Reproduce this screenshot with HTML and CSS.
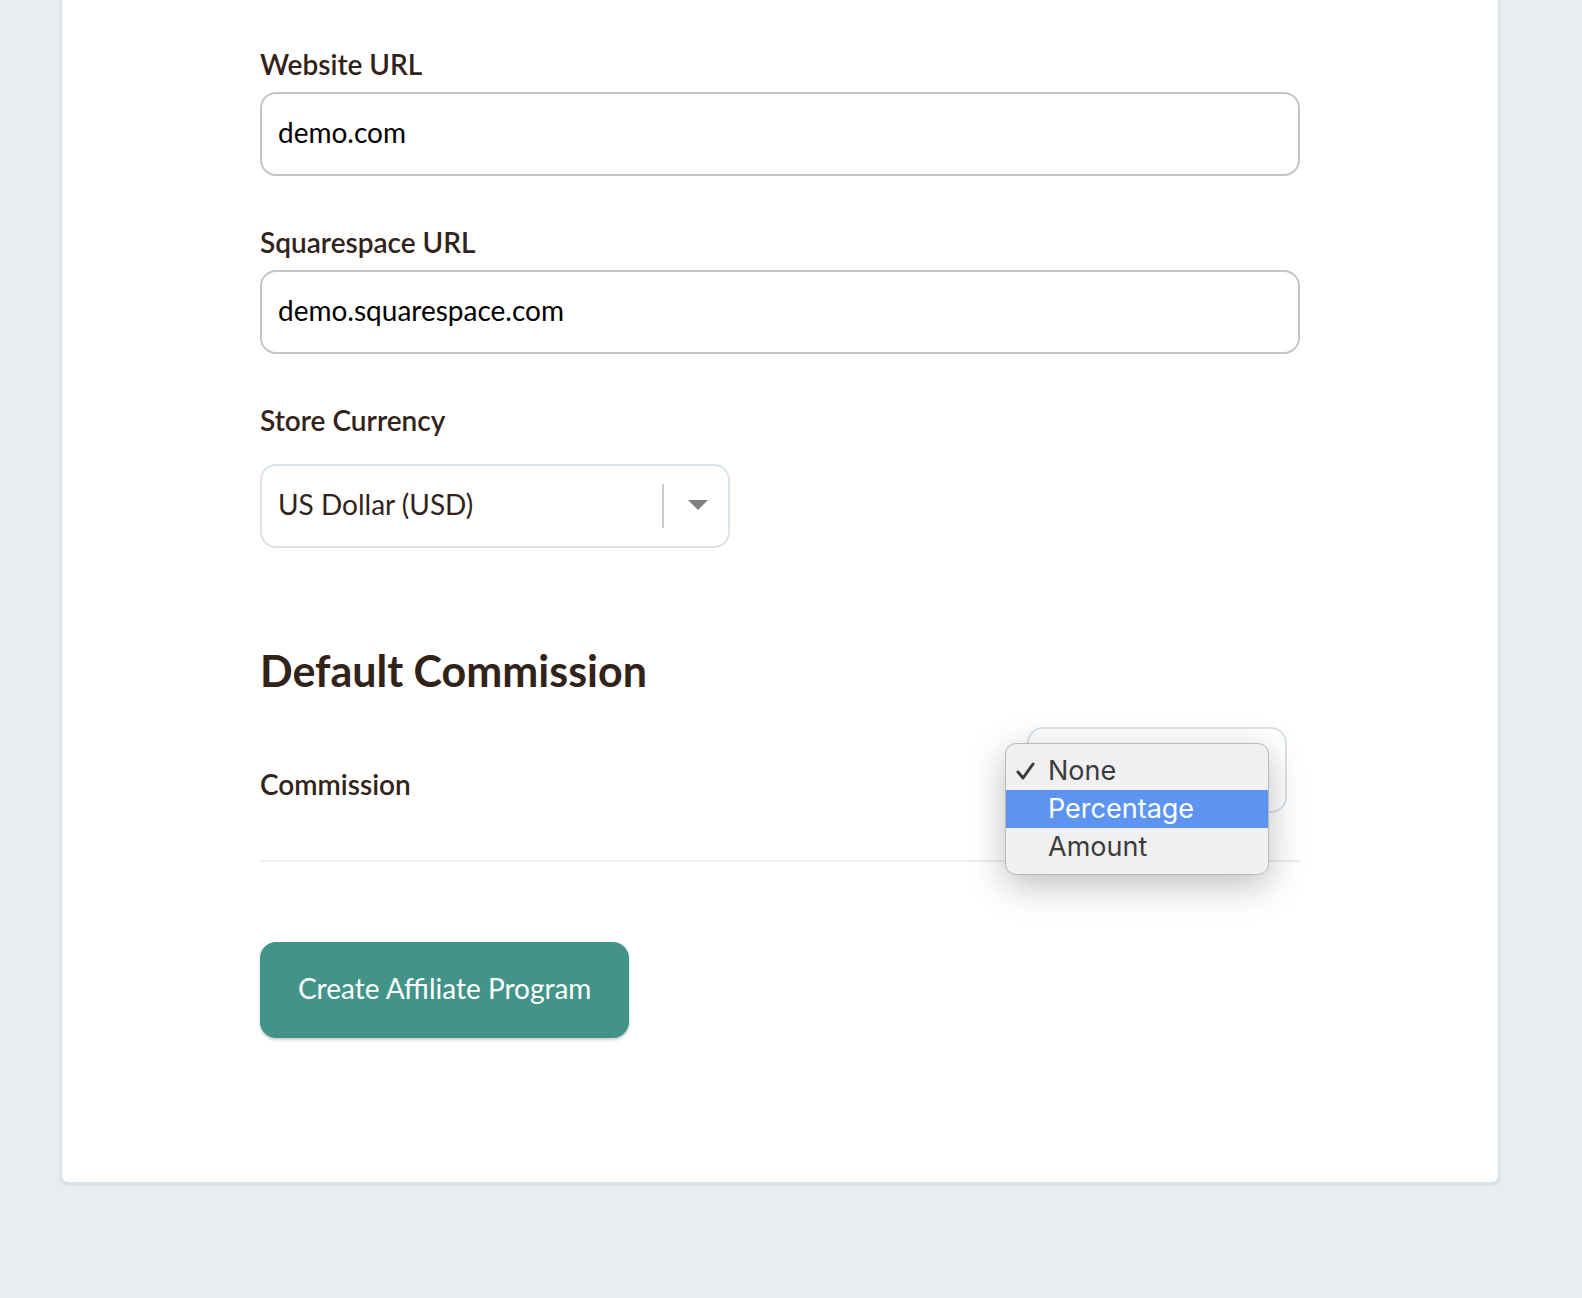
FILE: index.html
```html
<!DOCTYPE html>
<html lang="en">
<head>
<meta charset="utf-8">
<meta name="viewport" content="width=device-width, initial-scale=1">
<title>Create Affiliate Program</title>
<link rel="stylesheet" href="styles.css">
</head>
<body>
<main class="page">
  <form class="card">
    <div class="field">
      <label class="label" for="website">Website URL</label>
      <input class="input" id="website" type="text" value="demo.com">
    </div>
    <div class="field">
      <label class="label" for="squarespace">Squarespace URL</label>
      <input class="input" id="squarespace" type="text" value="demo.squarespace.com">
    </div>
    <div class="field field-currency">
      <label class="label" for="currency">Store Currency</label>
      <div class="select-box">
        <select class="select" id="currency"><option>US Dollar (USD)</option></select>
        <span class="select-divider"></span>
        <svg class="select-arrow" width="20" height="10" viewBox="0 0 20 10" aria-hidden="true"><path d="M0 0h20L10 10z" fill="#808080"/></svg>
      </div>
    </div>
    <h2 class="heading">Default Commission</h2>
    <div class="row">
      <label class="label" for="commission">Commission</label>
      <div class="commission">
        <select class="select" id="commission"><option>None</option><option>Percentage</option><option>Amount</option></select>
        <div class="menu" role="listbox" aria-label="Commission">
          <button class="option" type="button" role="option" aria-selected="true">
            <svg class="check" width="20" height="20" viewBox="0 0 20 20" aria-hidden="true"><path d="M2 11l5 6L17 3" fill="none" stroke="#3c3c3c" stroke-width="3" stroke-linecap="round" stroke-linejoin="round"/></svg>None</button>
          <button class="option option-active" type="button" role="option">Percentage</button>
          <button class="option" type="button" role="option">Amount</button>
        </div>
      </div>
    </div>
    <button class="submit" type="submit">Create Affiliate Program</button>
  </form>
</main>
</body>
</html>
```
FILE: styles.css
```css
* {
  box-sizing: border-box;
}

body {
  margin: 0;
  background: #e8edf1;
  color: #32231a;
  font-family: Lato, "Open Sans", sans-serif;
  font-size: 28px;
  line-height: 40px;
}

.page {
  padding: 0 82px 114px 60px;
}

.card {
  display: flex;
  flex-direction: column;
  padding: 44px 198px 144px;
  background: #fff;
  border: 2px solid #dae3ea;
  border-top: 0;
  border-radius: 0 0 8px 8px;
  box-shadow: 0 1px 3px rgba(0, 0, 0, 0.08);
}

.field {
  display: flex;
  flex-direction: column;
  gap: 8px;
  margin-bottom: 46px;
}

.field-currency {
  gap: 24px;
  margin-bottom: 91px;
}

.label {
  font-weight: 600;
}

.input,
.select {
  width: 100%;
  height: 84px;
  padding: 0 16px 4px;
  border: 2px solid #c1c5ca;
  border-radius: 16px;
  background: #fff;
  color: #000;
  font: inherit;
}

.select {
  appearance: none;
  border-color: #dae3ea;
  color: #32231a;
}

.select-box {
  position: relative;
  max-width: 470px;
}

.select-divider {
  position: absolute;
  top: 20px;
  right: 66px;
  width: 2px;
  height: 44px;
  background: #ccc;
}

.select-arrow {
  position: absolute;
  top: 36px;
  right: 22px;
}

.heading {
  margin: 0 0 24px;
  font-size: 43px;
  line-height: 64px;
  font-weight: 700;
}

.row {
  display: flex;
  align-items: flex-end;
  justify-content: space-between;
  padding: 0 13px 47px 0;
  margin-bottom: 80px;
  border-bottom: 2px solid #e8edf1;
}

.row .label {
  padding-bottom: 9px;
}

.commission {
  position: relative;
  width: 260px;
}

.commission .select {
  display: block;
  height: 86px;
}

.menu {
  position: absolute;
  top: 16px;
  left: -22px;
  width: 264px;
  padding: 8px 0;
  border: 1px solid #b9b9b9;
  border-radius: 11px;
  background: #f0f0f0;
  box-shadow: 0 10px 36px rgba(0, 0, 0, 0.26);
}

.option {
  position: relative;
  display: block;
  width: 100%;
  height: 38px;
  padding: 0 0 0 42px;
  border: 0;
  background: none;
  color: #3c3c3c;
  font: 27px/38px Inter, sans-serif;
  text-align: left;
}

.option-active {
  background: #5e94f1;
  color: #fff;
}

.check {
  position: absolute;
  top: 9px;
  left: 10px;
}

.submit {
  align-self: flex-start;
  height: 96px;
  padding: 0 38px 4px;
  border: 0;
  border-radius: 16px;
  background: #439488;
  color: #fff;
  font: inherit;
  box-shadow: 0 2px 3px rgba(0, 0, 0, 0.2);
}
```
